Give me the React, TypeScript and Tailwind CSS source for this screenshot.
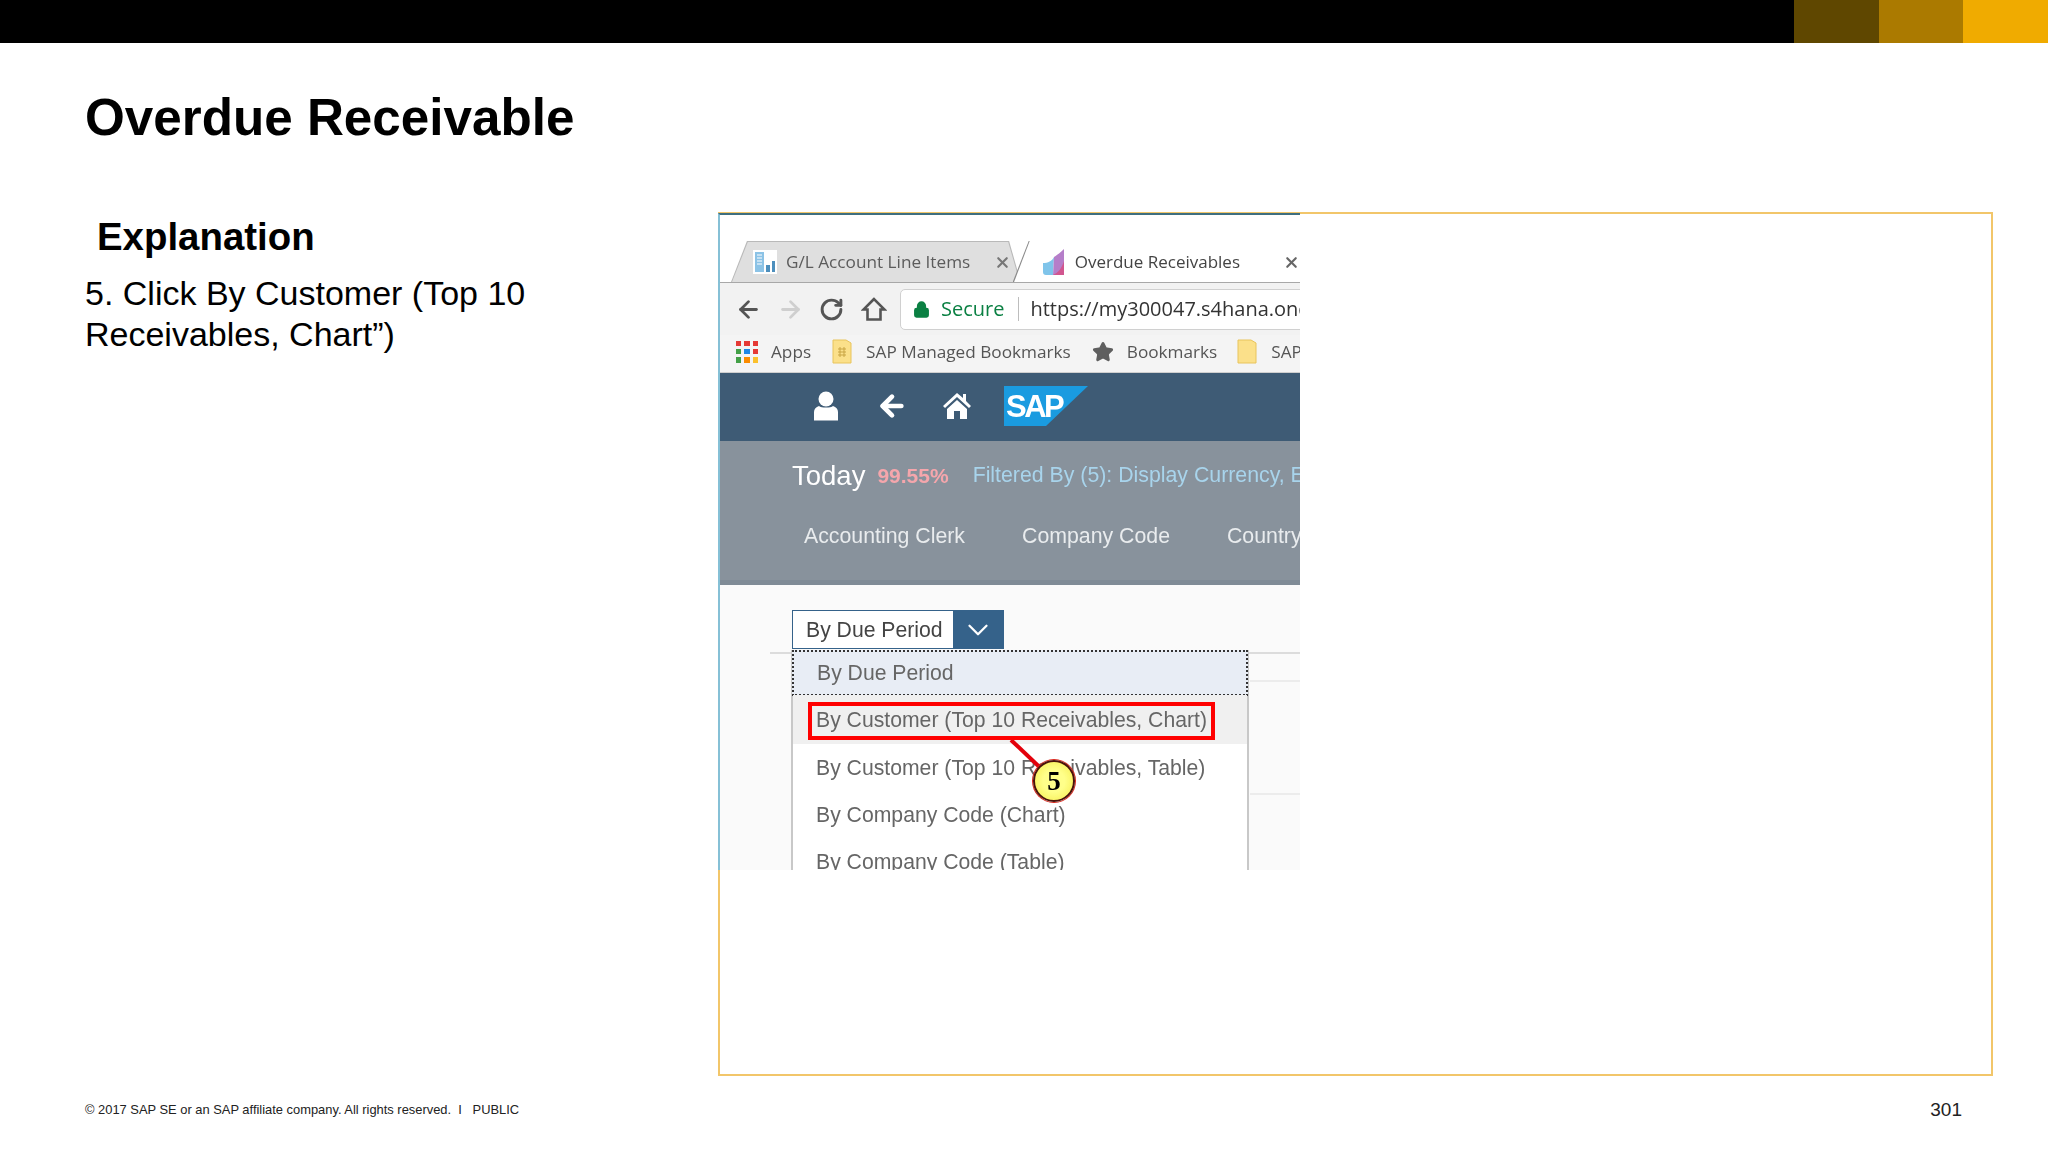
import { ArrowLeft, ArrowRight, ChevronDown, Lock, RotateCw, Star, X } from 'lucide-react';

const dropdownItems = [
  'By Customer (Top 10 Receivables, Table)',
  'By Company Code (Chart)',
  'By Company Code (Table)',
];

function FolderIcon({ lines }: { lines?: boolean }) {
  return (
    <svg width="20" height="25" viewBox="0 0 20 25" className="shrink-0">
      <path d="M1 1h13l5 3v20H1z" fill="#fbe08a" stroke="#e8c45c" />
      {lines && <path d="M6 10h8M6 13h8M6 16h8M8 8v10M12 8v10" stroke="#c9a544" strokeWidth="1" fill="none" />}
    </svg>
  );
}

function AppsIcon() {
  const colors = ['#e53935', '#e53935', '#e53935', '#43a047', '#1e88e5', '#e53935', '#43a047', '#fb8c00', '#fbc02d'];
  return (
    <div className="grid h-[22px] w-[22px] shrink-0 grid-cols-3 gap-[3px]">
      {colors.map((c, i) => (
        <span key={i} style={{ backgroundColor: c }} />
      ))}
    </div>
  );
}

function GlAppIcon() {
  return (
    <svg width="24" height="24" viewBox="0 0 24 24" className="shrink-0">
      <rect width="24" height="24" fill="#fff" />
      <path d="M2 2h9v20H2z" fill="#8cc3e6" />
      <path d="M4 5h5M4 8h5M4 11h5M4 14h5" stroke="#fff" strokeWidth="1.2" />
      <path d="M13 15h4v7h-4zM19 11h3v11h-3z" fill="#4d8fbd" />
    </svg>
  );
}

function OverdueAppIcon() {
  return (
    <svg width="24" height="28" viewBox="0 0 24 28" className="shrink-0">
      <path d="M1 15c5 0 9-2 11-6l-1 18H4c-2 0-3-1-3-3z" fill="#7fc4ea" />
      <path d="M12 9c3-2 7-5 10-8v26H11z" fill="#b57ec9" />
      <path d="M22 13v14H11c5-2 9-7 11-14z" fill="#d1568f" />
    </svg>
  );
}

function ChromeHomeIcon() {
  return (
    <svg width="26" height="26" viewBox="0 0 26 26" fill="none" stroke="#555" strokeWidth="2.600" strokeLinejoin="miter" className="ml-[17px] shrink-0">
      <path d="M13 3 2.500 13.500H6.500V23.500H19.500V13.500H23.500z" />
    </svg>
  );
}

function PersonIcon() {
  return (
    <svg width="24" height="30" viewBox="0 0 24 30" fill="#fff">
      <circle cx="12" cy="8" r="7.500" />
      <path d="M5 15c2 2 12 2 14 0 3 1 5 3 5 6v8.500H0V21c0-3 2-5 5-6z" />
    </svg>
  );
}

function HouseIcon() {
  return (
    <svg width="28" height="26" viewBox="0 0 28 26" fill="#fff">
      <path d="M14 0 0 13l2 2L14 4l12 11 2-2-5-5V1h-3v4z" />
      <path d="M4 16 14 7l10 9v10h-7v-8h-6v8H4z" />
    </svg>
  );
}

function SapLogo() {
  return (
    <div className="flex h-[40px] w-[84px] items-center bg-[#1a9be0] pl-[2px] [clip-path:polygon(0_0,100%_0,50%_100%,0_100%)]">
      <span className="text-[31px] leading-none font-bold tracking-[-2.500px] text-white">SAP</span>
    </div>
  );
}

function BrowserChrome() {
  return (
    <div className="font-['Open_Sans',sans-serif]">
      <div className="h-[27px] bg-white" />
      <div className="flex h-[41px] items-end border-b border-[#a8a8a8] bg-white pl-[11px]">
        <div className="h-[41px] w-[301px] bg-[#b9b9b9] p-[1px] pb-0 [clip-path:polygon(5.500%_0,96%_0,100%_100%,0_100%)]">
          <div className="flex h-full items-center gap-[9px] bg-[#dfdfdf] pr-[9px] pl-[21px] text-[17.200px] whitespace-nowrap text-[#5c5c5c] [clip-path:polygon(5.500%_0,96%_0,100%_100%,0_100%)]">
            <GlAppIcon />
            <span className="flex-1">G/L Account Line Items</span>
            <X size={17} strokeWidth={3} className="text-[#777]" />
          </div>
        </div>
        <div className="relative -ml-[8px] h-[41px] flex-1 bg-[#8a8a8a] [clip-path:polygon(16px_0,100%_0,100%_100%,0_100%)]">
          <div className="flex h-[42px] items-center gap-[9px] bg-white pl-[29px] text-[17px] whitespace-nowrap text-[#444] [clip-path:polygon(17px_0,100%_0,100%_100%,1px_100%)]">
            <OverdueAppIcon />
            <span>Overdue Receivables</span>
            <X size={17} strokeWidth={3} className="ml-[34px] shrink-0 text-[#666]" />
          </div>
        </div>
      </div>
      <div className="flex h-[52px] items-center bg-[#f2f2f2] pl-[15px]">
        <ArrowLeft size={27} strokeWidth={2.500} className="shrink-0 text-[#555]" />
        <ArrowRight size={27} strokeWidth={2.500} className="ml-[15px] shrink-0 text-[#cfcfcf]" />
        <RotateCw size={25} strokeWidth={2.800} className="ml-[15px] shrink-0 text-[#555]" />
        <ChromeHomeIcon />
        <div className="ml-[13px] flex h-[41px] flex-1 items-center rounded-l-[5px] border border-[#d0d0d0] bg-white pl-[12px] text-[20px] whitespace-nowrap">
          <Lock size={17} strokeWidth={3} className="shrink-0 fill-[#0b8043] text-[#0b8043]" />
          <span className="ml-[11px] text-[#0b8043]">Secure</span>
          <span className="ml-[14px] h-[24px] w-px bg-[#bdbdbd]" />
          <span className="ml-[11px] text-[#333]">https://my300047.s4hana.ondemand.com</span>
        </div>
      </div>
      <div className="flex h-[38px] items-center border-b border-[#cfcfcf] bg-[#f4f4f4] pb-[4px] pl-[16px] text-[17.200px] whitespace-nowrap text-[#555]">
        <AppsIcon />
        <span className="ml-[13px]">Apps</span>
        <span className="ml-[21px]"><FolderIcon lines /></span>
        <span className="ml-[14px]">SAP Managed Bookmarks</span>
        <Star size={22} className="ml-[21px] shrink-0 fill-[#5f5f5f] text-[#5f5f5f]" />
        <span className="ml-[13px]">Bookmarks</span>
        <span className="ml-[20px]"><FolderIcon /></span>
        <span className="ml-[14px]">SAP</span>
      </div>
    </div>
  );
}

function FioriHeader() {
  return (
    <>
      <div className="flex h-[68px] items-center bg-[#3e5b75] pb-[2px] pl-[94px]">
        <PersonIcon />
        <ArrowLeft size={32} strokeWidth={3.500} className="ml-[38px] text-white" />
        <div className="ml-[35px]"><HouseIcon /></div>
        <div className="ml-[33px]"><SapLogo /></div>
      </div>
      <div className="h-[144px] whitespace-nowrap border-b-[5px] border-[#7f8b96] bg-[#88929c]">
        <div className="flex h-[70px] items-center pl-[72px]">
          <span className="text-[27.500px] text-white">Today</span>
          <span className="ml-[12px] text-[21px] font-bold text-[#f5a6ac]">99.55%</span>
          <span className="ml-[24px] text-[21.300px] text-[#a8d4ec]">Filtered By (5): Display Currency, Exclude</span>
        </div>
        <div className="mt-[10px] flex items-center gap-[57px] pl-[84px] text-[21.300px] text-[#e9ecee]">
          <span>Accounting Clerk</span>
          <span>Company Code</span>
          <span>Country</span>
        </div>
      </div>
    </>
  );
}

function ScreenshotBody() {
  return (
    <div className="relative h-[286px] bg-[#fafafa]">
      <div className="ml-[72px] flex h-[39px] w-[212px] translate-y-[25px] border border-[#35628a] bg-white">
        <span className="flex-1 pl-[13px] text-[21.200px] leading-[37px] text-[#444]">By Due Period</span>
        <span className="flex w-[50px] items-center justify-center bg-[#35628a]">
          <ChevronDown size={34} strokeWidth={1.600} className="text-white" />
        </span>
      </div>
      <div className="absolute top-[67px] right-0 left-[50px] h-[2px] bg-[#dcdcdc]" />
      <div className="absolute top-[95px] right-0 left-[530px] h-[2px] bg-[#ececec]" />
      <div className="absolute top-[208px] right-0 left-[530px] h-[2px] bg-[#ececec]" />

      {/* dropdown opened over the page */}
      <div className="absolute top-[65px] left-[71px] h-[240px] w-[458px] border-x-2 border-[#c8c8c8] bg-white text-[21.200px] whitespace-nowrap text-[#666]">
        <div className="-mx-[1px] flex h-[46px] items-center border-2 border-dotted border-[#333] bg-[#e8edf5] pl-[23px]">By Due Period</div>
        <div className="relative -mt-[1px] flex h-[49px] items-center bg-[#f0f0f0] pl-[23px]">
          By Customer (Top 10 Receivables, Chart)
          <div className="absolute top-[7px] left-[15px] h-[38px] w-[407px] border-[4px] border-[#ff0000]" />
        </div>
        {dropdownItems.map((item) => (
          <div key={item} className="flex h-[47px] items-center pl-[23px]">{item}</div>
        ))}
      </div>

      {/* callout for step 5 */}
      <svg className="absolute top-[155px] left-[289px]" width="50" height="40" viewBox="0 0 50 40">
        <path d="M2 0 40 36" stroke="#e3000b" strokeWidth="4" fill="none" />
      </svg>
      <div className="absolute top-[175px] left-[313px] flex h-[42px] w-[42px] items-center justify-center rounded-full border-2 border-[#4a120a] bg-[radial-gradient(circle,#ffff8a_40%,#f5ec4a_100%)] font-['Liberation_Serif',serif] text-[27px] leading-none font-bold text-black shadow-[0_0_0_1px_#d8261c]">
        5
      </div>
    </div>
  );
}

export default function App() {
  return (
    <div className="flex h-[1152px] w-[2048px] flex-col overflow-hidden bg-white font-['Liberation_Sans',Arial,sans-serif] text-black">
      <div className="flex h-[43px] shrink-0 bg-black">
        <div className="flex-1" />
        <div className="w-[85px] bg-[#5f4700]" />
        <div className="w-[84px] bg-[#ab7a00]" />
        <div className="w-[85px] bg-[#f0ab00]" />
      </div>

      <h1 className="h-[169px] shrink-0 pt-[45px] pl-[85px] text-[51.200px] leading-[60px] font-bold">Overdue Receivable</h1>

      <div className="flex h-[865px] shrink-0 pl-[85px]">
        <div className="w-[633px]">
          <h2 className="pt-[1px] pl-[12px] text-[38.400px] leading-[48px] font-bold">Explanation</h2>
          <p className="mt-[12px] w-[500px] text-[34px] leading-[41px]">5. Click By Customer (Top 10 Receivables, Chart”)</p>
        </div>
        <div className="h-[864px] w-[1275px] border-2 border-[#f2c66a] bg-white">
          <div className="-mt-[1px] -ml-[2px] h-[657px] w-[582px] overflow-hidden border-t-2 border-l-2 border-t-[#3f6f80] border-l-[#86c0d6] blur-[0.4px]">
            <BrowserChrome />
            <FioriHeader />
            <ScreenshotBody />
          </div>
        </div>
      </div>

      <div className="flex flex-1 justify-between pt-[24px] pr-[86px] pl-[85px]">
        <span className="text-[12.900px] leading-[18px] text-[#222]">© 2017 SAP SE or an SAP affiliate company. All rights reserved.&nbsp;&nbsp;I&nbsp;&nbsp;&nbsp;PUBLIC</span>
        <span className="text-[19px] leading-[18px] text-[#222]">301</span>
      </div>
    </div>
  );
}
